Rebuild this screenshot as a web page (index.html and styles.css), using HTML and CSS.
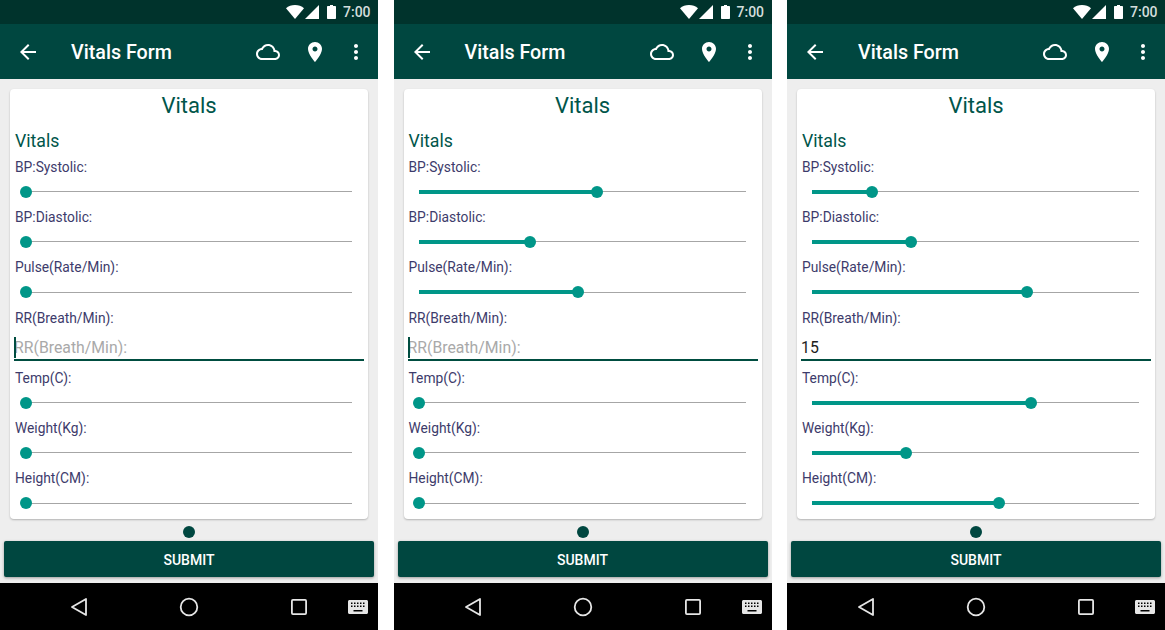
FILE: index.html
```html
<!DOCTYPE html>
<html lang="en">
<head>
	<meta charset="UTF-8">
	<title>Vitals Form</title>
	<link rel="stylesheet" href="styles.css">
</head>
<body>
	<svg class="defs" aria-hidden="true">
		<symbol id="i-back" viewBox="0 0 24 24"><path d="M20 11H7.83l5.59-5.59L12 4l-8 8 8 8 1.41-1.41L7.83 13H20v-2z"/></symbol>
		<symbol id="i-cloud" viewBox="0 0 24 24"><path d="M19.35 10.04C18.67 6.59 15.64 4 12 4 9.11 4 6.6 5.64 5.35 8.04 2.34 8.36 0 10.91 0 14c0 3.31 2.69 6 6 6h13c2.76 0 5-2.24 5-5 0-2.64-2.05-4.78-4.65-4.96zM19 18H6c-2.21 0-4-1.79-4-4s1.79-4 4-4h.71C7.37 7.69 9.48 6 12 6c3.04 0 5.5 2.46 5.5 5.5v.5H19c1.66 0 3 1.34 3 3s-1.34 3-3 3z"/></symbol>
		<symbol id="i-place" viewBox="0 0 24 24"><path d="M12 2C8.13 2 5 5.13 5 9c0 5.25 7 13 7 13s7-7.75 7-13c0-3.87-3.13-7-7-7zm0 9.5c-1.38 0-2.5-1.12-2.5-2.5s1.12-2.5 2.5-2.5 2.5 1.12 2.5 2.5-1.12 2.5-2.5 2.5z"/></symbol>
		<symbol id="i-more" viewBox="0 0 24 24"><path d="M12 8c1.1 0 2-.9 2-2s-.9-2-2-2-2 .9-2 2 .9 2 2 2zm0 2c-1.1 0-2 .9-2 2s.9 2 2 2 2-.9 2-2-.9-2-2-2zm0 6c-1.1 0-2 .9-2 2s.9 2 2 2 2-.9 2-2-.9-2-2-2z"/></symbol>
		<symbol id="i-wifi" viewBox="0 0 18 14"><path d="M9 14 0 3.2C2.4 1.2 5.5 0 9 0s6.6 1.2 9 3.2z"/></symbol>
		<symbol id="i-signal" viewBox="0 0 14 14"><path d="M0 14 14 0v14z"/></symbol>
		<symbol id="i-battery" viewBox="0 0 9 14"><path d="M3 0h3v1h2c.6 0 1 .4 1 1v11c0 .6-.4 1-1 1H1c-.6 0-1-.4-1-1V2c0-.6.4-1 1-1h2z"/></symbol>
		<symbol id="i-nav-back" viewBox="0 0 18 20"><path d="M16 2 2 10l14 8z" fill="none" stroke="currentColor" stroke-width="1.8" stroke-linejoin="round"/></symbol>
		<symbol id="i-nav-home" viewBox="0 0 20 20"><circle cx="10" cy="10" r="8.3" fill="none" stroke="currentColor" stroke-width="1.8"/></symbol>
		<symbol id="i-nav-recent" viewBox="0 0 18 18"><rect x="1.9" y="1.9" width="14.2" height="14.2" rx="1" fill="none" stroke="currentColor" stroke-width="1.8"/></symbol>
		<symbol id="i-keyboard" viewBox="0 0 20 14"><path fill-rule="evenodd" d="M1.5 0h17c.8 0 1.500.7 1.500 1.500v11c0 .8-.7 1.500-1.500 1.500h-17C.7 14 0 13.300 0 12.500v-11C0 .7.700 0 1.500 0zM3 2.500v1.500h1.500V2.500zm3 0v1.500h1.500V2.500zm3 0v1.500h1.500V2.500zm3 0v1.500h1.500V2.500zm3 0v1.500h1.500V2.500zM3 5.500V7h1.500V5.500zm3 0V7h1.500V5.500zm3 0V7h1.500V5.500zm3 0V7h1.500V5.500zm3 0V7h1.500V5.500zM5.500 10v1.500h9V10z"/></symbol>
	</svg>

	<section class="phone">
		<div class="statusbar">
			<svg class="st-wifi"><use href="#i-wifi"/></svg>
			<svg class="st-signal"><use href="#i-signal"/></svg>
			<svg class="st-battery"><use href="#i-battery"/></svg>
			<span class="st-time">7:00</span>
		</div>
		<header class="toolbar">
			<svg class="icon"><use href="#i-back"/></svg>
			<h1 class="toolbar-title">Vitals Form</h1>
			<svg class="icon act-cloud"><use href="#i-cloud"/></svg>
			<svg class="icon act-place"><use href="#i-place"/></svg>
			<svg class="icon act-more"><use href="#i-more"/></svg>
		</header>
		<main class="content">
			<div class="card">
				<h2 class="card-title">Vitals</h2>
				<h3 class="section-title">Vitals</h3>
				<div class="field"><label class="field-label">BP:Systolic:</label><div class="slider"><div class="track"><i class="fill" style="width:0%"></i><b class="thumb" style="left:0%"></b></div></div></div>
				<div class="field"><label class="field-label">BP:Diastolic:</label><div class="slider"><div class="track"><i class="fill" style="width:0%"></i><b class="thumb" style="left:0%"></b></div></div></div>
				<div class="field"><label class="field-label">Pulse(Rate/Min):</label><div class="slider"><div class="track"><i class="fill" style="width:0%"></i><b class="thumb" style="left:0%"></b></div></div></div>
				<label class="field-label">RR(Breath/Min):</label>
				<div class="text-input is-empty"><span class="caret"></span>RR(Breath/Min):</div>
				<div class="field"><label class="field-label">Temp(C):</label><div class="slider"><div class="track"><i class="fill" style="width:0%"></i><b class="thumb" style="left:0%"></b></div></div></div>
				<div class="field"><label class="field-label">Weight(Kg):</label><div class="slider"><div class="track"><i class="fill" style="width:0%"></i><b class="thumb" style="left:0%"></b></div></div></div>
				<div class="field"><label class="field-label">Height(CM):</label><div class="slider"><div class="track"><i class="fill" style="width:0%"></i><b class="thumb" style="left:0%"></b></div></div></div>
			</div>
			<span class="page-dot"></span>
			<button class="submit">SUBMIT</button>
		</main>
		<nav class="navbar">
			<svg class="nav-back"><use href="#i-nav-back"/></svg>
			<svg class="nav-home"><use href="#i-nav-home"/></svg>
			<svg class="nav-recent"><use href="#i-nav-recent"/></svg>
			<svg class="nav-keyboard"><use href="#i-keyboard"/></svg>
		</nav>
	</section>

	<section class="phone">
		<div class="statusbar">
			<svg class="st-wifi"><use href="#i-wifi"/></svg>
			<svg class="st-signal"><use href="#i-signal"/></svg>
			<svg class="st-battery"><use href="#i-battery"/></svg>
			<span class="st-time">7:00</span>
		</div>
		<header class="toolbar">
			<svg class="icon"><use href="#i-back"/></svg>
			<h1 class="toolbar-title">Vitals Form</h1>
			<svg class="icon act-cloud"><use href="#i-cloud"/></svg>
			<svg class="icon act-place"><use href="#i-place"/></svg>
			<svg class="icon act-more"><use href="#i-more"/></svg>
		</header>
		<main class="content">
			<div class="card">
				<h2 class="card-title">Vitals</h2>
				<h3 class="section-title">Vitals</h3>
				<div class="field"><label class="field-label">BP:Systolic:</label><div class="slider"><div class="track"><i class="fill" style="width:54.4%"></i><b class="thumb" style="left:54.4%"></b></div></div></div>
				<div class="field"><label class="field-label">BP:Diastolic:</label><div class="slider"><div class="track"><i class="fill" style="width:33.9%"></i><b class="thumb" style="left:33.9%"></b></div></div></div>
				<div class="field"><label class="field-label">Pulse(Rate/Min):</label><div class="slider"><div class="track"><i class="fill" style="width:48.6%"></i><b class="thumb" style="left:48.6%"></b></div></div></div>
				<label class="field-label">RR(Breath/Min):</label>
				<div class="text-input is-empty"><span class="caret"></span>RR(Breath/Min):</div>
				<div class="field"><label class="field-label">Temp(C):</label><div class="slider"><div class="track"><i class="fill" style="width:0%"></i><b class="thumb" style="left:0%"></b></div></div></div>
				<div class="field"><label class="field-label">Weight(Kg):</label><div class="slider"><div class="track"><i class="fill" style="width:0%"></i><b class="thumb" style="left:0%"></b></div></div></div>
				<div class="field"><label class="field-label">Height(CM):</label><div class="slider"><div class="track"><i class="fill" style="width:0%"></i><b class="thumb" style="left:0%"></b></div></div></div>
			</div>
			<span class="page-dot"></span>
			<button class="submit">SUBMIT</button>
		</main>
		<nav class="navbar">
			<svg class="nav-back"><use href="#i-nav-back"/></svg>
			<svg class="nav-home"><use href="#i-nav-home"/></svg>
			<svg class="nav-recent"><use href="#i-nav-recent"/></svg>
			<svg class="nav-keyboard"><use href="#i-keyboard"/></svg>
		</nav>
	</section>

	<section class="phone">
		<div class="statusbar">
			<svg class="st-wifi"><use href="#i-wifi"/></svg>
			<svg class="st-signal"><use href="#i-signal"/></svg>
			<svg class="st-battery"><use href="#i-battery"/></svg>
			<span class="st-time">7:00</span>
		</div>
		<header class="toolbar">
			<svg class="icon"><use href="#i-back"/></svg>
			<h1 class="toolbar-title">Vitals Form</h1>
			<svg class="icon act-cloud"><use href="#i-cloud"/></svg>
			<svg class="icon act-place"><use href="#i-place"/></svg>
			<svg class="icon act-more"><use href="#i-more"/></svg>
		</header>
		<main class="content">
			<div class="card">
				<h2 class="card-title">Vitals</h2>
				<h3 class="section-title">Vitals</h3>
				<div class="field"><label class="field-label">BP:Systolic:</label><div class="slider"><div class="track"><i class="fill" style="width:18.3%"></i><b class="thumb" style="left:18.3%"></b></div></div></div>
				<div class="field"><label class="field-label">BP:Diastolic:</label><div class="slider"><div class="track"><i class="fill" style="width:30%"></i><b class="thumb" style="left:30%"></b></div></div></div>
				<div class="field"><label class="field-label">Pulse(Rate/Min):</label><div class="slider"><div class="track"><i class="fill" style="width:65.7%"></i><b class="thumb" style="left:65.7%"></b></div></div></div>
				<label class="field-label">RR(Breath/Min):</label>
				<div class="text-input">15</div>
				<div class="field"><label class="field-label">Temp(C):</label><div class="slider"><div class="track"><i class="fill" style="width:66.7%"></i><b class="thumb" style="left:66.7%"></b></div></div></div>
				<div class="field"><label class="field-label">Weight(Kg):</label><div class="slider"><div class="track"><i class="fill" style="width:28.7%"></i><b class="thumb" style="left:28.7%"></b></div></div></div>
				<div class="field"><label class="field-label">Height(CM):</label><div class="slider"><div class="track"><i class="fill" style="width:56.9%"></i><b class="thumb" style="left:56.9%"></b></div></div></div>
			</div>
			<span class="page-dot"></span>
			<button class="submit">SUBMIT</button>
		</main>
		<nav class="navbar">
			<svg class="nav-back"><use href="#i-nav-back"/></svg>
			<svg class="nav-home"><use href="#i-nav-home"/></svg>
			<svg class="nav-recent"><use href="#i-nav-recent"/></svg>
			<svg class="nav-keyboard"><use href="#i-keyboard"/></svg>
		</nav>
	</section>
</body>
</html>
```

FILE: styles.css
```css
*{padding: 0; margin: 0; box-sizing: border-box;}
html, body{
	height: 630px;
	overflow: hidden;
}
body{
	display: flex;
	justify-content: space-between;
	background: #fff;
	font-family: Roboto, "Liberation Sans", sans-serif;
}
.defs{
	width: 0;
	height: 0;
	position: absolute;
}
svg{
	display: block;
	fill: currentColor;
}
.phone{
	width: 378px;
	height: 630px;
	display: flex;
	flex-direction: column;
	background: #eee;
}

/* barra de estado */
.statusbar{
	height: 24px;
	flex: none;
	display: flex;
	align-items: center;
	background: #00332c;
	color: #fff;
}
.st-wifi{
	width: 18px;
	height: 14px;
	margin-left: 286px;
}
.st-signal{
	width: 14px;
	height: 14px;
	margin-left: 1px;
}
.st-battery{
	width: 9px;
	height: 14px;
	margin-left: 8px;
}
.st-time{
	margin-left: 7px;
	font-size: 14px;
	font-weight: 500;
	color: #d4dedc;
}

/* toolbar */
.toolbar{
	height: 55px;
	flex: none;
	display: flex;
	align-items: center;
	padding: 0 10px 0 16px;
	background: #004740;
	color: #fff;
}
.icon{
	width: 24px;
	height: 24px;
	flex: none;
}
.toolbar-title{
	margin: 2px 0 0 31px;
	font-size: 19.7px;
	font-weight: 500;
}
.act-cloud{margin-left: auto;}
.act-place{margin-left: 23px;}
.act-more{margin-left: 17px;}

/* contenido */
.content{
	flex: 1;
	display: flex;
	flex-direction: column;
	align-items: center;
}
.card{
	width: 358px;
	height: 430px;
	margin-top: 10px;
	padding: 0 5px;
	background: #fff;
	border-radius: 4px;
	box-shadow: 0 1px 2px rgba(0,0,0,.25);
}
.card-title{
	height: 32px;
	line-height: 33px;
	text-align: center;
	font-size: 22px;
	font-weight: 400;
	color: #00554a;
}
.section-title{
	height: 22px;
	margin-top: 9px;
	margin-bottom: 4px;
	line-height: 22px;
	font-size: 17.7px;
	font-weight: 400;
	color: #00554a;
}
.field-label{
	display: block;
	height: 22.1px;
	line-height: 22px;
	font-size: 13.8px;
	color: #3d3b6b;
}
.slider{
	height: 28.1px;
	padding: 0 11px 1px 10px;
	display: flex;
	align-items: center;
}
.track{
	flex: 1;
	height: 1px;
	position: relative;
	background: #a6a6a6;
}
.fill{
	display: block;
	height: 4px;
	margin-top: -1.5px;
	position: absolute;
	top: 0;
	left: 0;
	background: #009688;
}
.thumb{
	width: 12px;
	height: 12px;
	margin: -5.5px 0 0 -5.5px;
	position: absolute;
	top: 0;
	border-radius: 50%;
	background: #009688;
}
.text-input{
	height: 32.4px;
	margin: 0 -1px 6px;
	padding-top: 8px;
	display: flex;
	align-items: center;
	position: relative;
	font-size: 15.8px;
	color: #212121;
	border-bottom: 2px solid #004d40;
}
.text-input.is-empty{
	color: #a9a9a9;
}
.caret{
	width: 2px;
	height: 21px;
	position: absolute;
	left: 0;
	top: 8px;
	background: #004d40;
}
.page-dot{
	width: 12px;
	height: 12px;
	flex: none;
	margin-top: 7px;
	border-radius: 50%;
	background: #004740;
}
.submit{
	width: 370px;
	height: 36px;
	flex: none;
	margin-top: 3px;
	padding-top: 2px;
	border: 0;
	border-radius: 2px;
	background: #004740;
	color: #fff;
	font-family: inherit;
	font-size: 14px;
	font-weight: 500;
	box-shadow: 0 1px 3px rgba(0,0,0,.35);
}

/* barra de navegacion */
.navbar{
	height: 47px;
	flex: none;
	display: flex;
	align-items: center;
	background: #000;
	color: #e6e6e6;
}
.nav-back{
	width: 18px;
	height: 20px;
	margin-left: 70px;
}
.nav-home{
	width: 20px;
	height: 20px;
	margin-left: 91px;
}
.nav-recent{
	width: 18px;
	height: 18px;
	margin-left: 91px;
}
.nav-keyboard{
	width: 20px;
	height: 14px;
	margin-left: 40px;
}
```
